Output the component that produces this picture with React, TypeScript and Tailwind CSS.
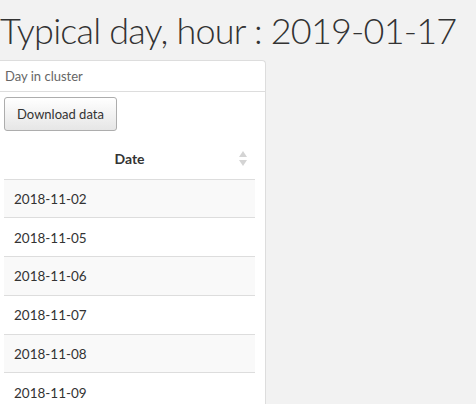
import { useState } from 'react';

const dates = [
  '2018-11-02',
  '2018-11-05',
  '2018-11-06',
  '2018-11-07',
  '2018-11-08',
  '2018-11-09',
];

function SortIcon() {
  return (
    <svg width="8" height="15" viewBox="0 0 8 15" className="text-[#d4d4d4]">
      <path d="M4 0 L8 6 L0 6 Z" fill="currentColor" />
      <path d="M4 15 L8 9 L0 9 Z" fill="currentColor" />
    </svg>
  );
}

export default function App() {
  const [asc, setAsc] = useState(true);
  const rows = asc ? dates : [...dates].reverse();

  return (
    <div className="min-h-screen w-[476px] h-[404px] overflow-hidden bg-[#f2f2f2] font-['Lato','Liberation_Sans',sans-serif] text-[#333]">
      {/* Title */}
      <h1 className="pt-[6px] text-[36px] font-light tracking-[-0.8px] leading-[48px] whitespace-nowrap text-[#333]">
        Typical day, hour : 2019-01-17
      </h1>

      {/* Panel */}
      <div className="mt-[6px] w-[266px] bg-white border-r border-t border-[#ddd] rounded-tr-[4px]">
        <div className="h-[31px] pl-[5px] pt-[1px] flex items-center text-[13px] text-[#666] border-b border-[#ddd]">
          Day in cluster
        </div>
        <div className="pl-[4px] pt-[5px]">
          <button className="h-[34px] w-[113px] pt-[2px] rounded-[3px] border border-[#adadad] bg-gradient-to-b from-white to-[#e6e6e6] text-[13px] text-[#333]">
            Download data
          </button>
        </div>

        <table className="ml-[4px] mt-[7px] w-[251px] border-collapse text-[13.5px]">
          <thead>
            <tr
              className="h-[41px] border-b border-[#ddd] cursor-pointer"
              onClick={() => setAsc(!asc)}
            >
              <th className="relative font-bold text-[14px] text-center">
                Date
                <span className="absolute right-[8px] top-[13px]">
                  <SortIcon />
                </span>
              </th>
            </tr>
          </thead>
          <tbody>
            {rows.map((d, i) => (
              <tr
                key={d}
                className={`h-[38.8px] border-b border-[#ddd] ${i % 2 === 0 ? 'bg-[#f9f9f9]' : 'bg-white'}`}
              >
                <td className="pl-[10px] pt-[1px]">{d}</td>
              </tr>
            ))}
          </tbody>
        </table>
      </div>
    </div>
  );
}
